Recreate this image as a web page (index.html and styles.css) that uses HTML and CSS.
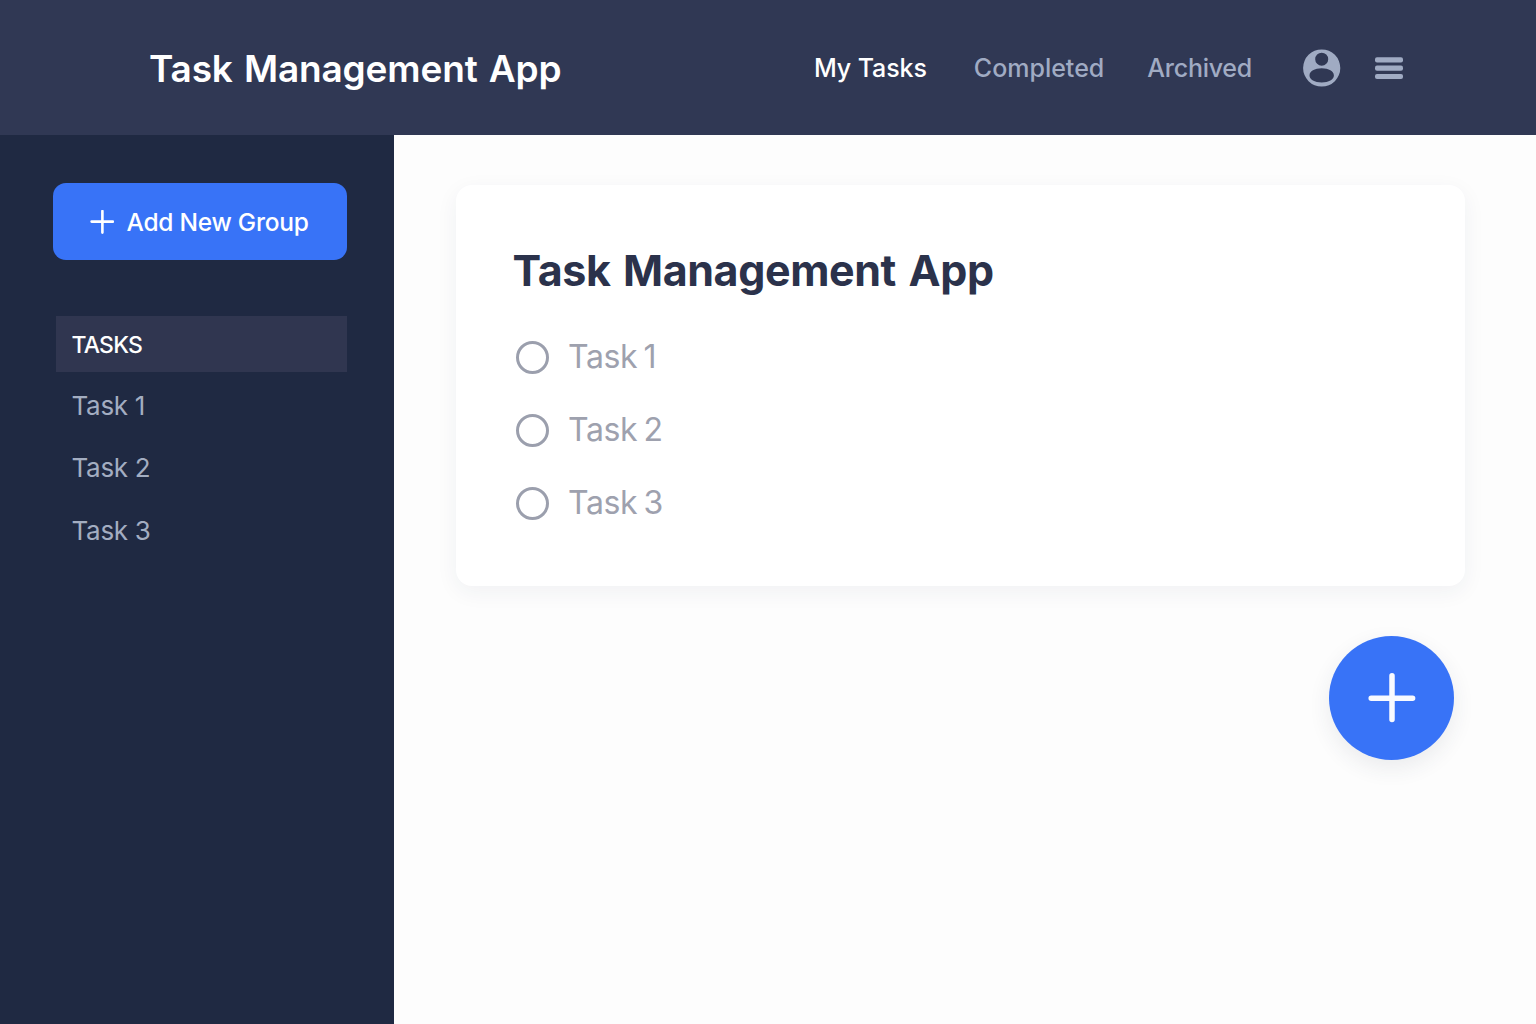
FILE: index.html
```html
<!DOCTYPE html>
<html lang="en">
<head>
<meta charset="utf-8">
<title>Task Management App</title>
<link rel="stylesheet" href="styles.css">
</head>
<body>
<header class="topbar">
  <div class="brand">Task Management App</div>
  <nav class="nav">
    <a class="nav-link active">My Tasks</a>
    <a class="nav-link completed">Completed</a>
    <a class="nav-link archived">Archived</a>
  </nav>
  <svg class="icon-user" viewBox="0 0 38 38"><path fill-rule="evenodd" d="M18.700 .4a18.600 18.600 0 1 1 0 37.200a18.600 18.600 0 1 1 0-37.200ZM18.700 3.700a6.500 6.500 0 1 0 0 13a6.500 6.500 0 1 0 0-13ZM18.700 19.300c-7 0-12.200 3-12.200 7.100s5.200 7 12.200 7s12.200-2.900 12.200-7s-5.200-7.100-12.200-7.100Z"/></svg>
  <svg class="icon-menu" viewBox="0 0 28 24"><rect y="1.200" width="28" height="5.200" rx="2"/><rect y="9.500" width="28" height="5.200" rx="2"/><rect y="17.900" width="28" height="5.200" rx="2"/></svg>
</header>
<div class="layout">
  <aside class="sidebar">
    <button class="add-group">
      <svg class="add-icon" viewBox="0 0 24 24"><path d="M12.400 1v21.600M1.600 11.600h21.400"/></svg>
      <span>Add New Group</span>
    </button>
    <ul class="groups">
      <li class="group current">TASKS</li>
      <li class="group">Task 1</li>
      <li class="group">Task 2</li>
      <li class="group">Task 3</li>
    </ul>
  </aside>
  <main class="content">
    <section class="card">
      <h1 class="card-title">Task Management App</h1>
      <ul class="tasks">
        <li class="task"><i class="check"></i><span class="task-name">Task 1</span></li>
        <li class="task"><i class="check"></i><span class="task-name">Task 2</span></li>
        <li class="task"><i class="check"></i><span class="task-name">Task 3</span></li>
      </ul>
    </section>
    <button class="fab" aria-label="Add task"><svg class="fab-icon" viewBox="0 0 50 50"><path d="M25 2.800v43.600M4.200 25.200h41.400"/></svg></button>
  </main>
</div>
</body>
</html>
```
FILE: styles.css
```css
* { box-sizing: border-box; }
body {
  margin: 0;
  height: 1024px;
  overflow: hidden;
  display: flex;
  flex-direction: column;
  font-family: Inter, "Liberation Sans", sans-serif;
  background: #fdfdfd;
}
ul { list-style: none; margin: 0; padding: 0; }
button { border: 0; font: inherit; padding: 0; }

.topbar {
  flex: none;
  height: 135px;
  padding: 0 133px 0 149px;
  display: flex;
  align-items: center;
  background: #303854;
}
.brand {
  margin-right: auto;
  color: #fff;
  font-size: 37px;
  font-weight: 580;
  line-height: 44px;
  letter-spacing: -.15px;
  word-spacing: 2px;
  margin-top: 2px;
}
.nav { display: flex; margin-right: 51px; }
.nav-link { font-size: 25px; line-height: 30px; color: #a0abc3; font-weight: 450; }
.nav-link.active { color: #fff; font-weight: 500; letter-spacing: -.1px; }
.completed { margin: 0 43px 0 47px; letter-spacing: 0; }
.archived { letter-spacing: -.25px; }
.icon-user { width: 38px; height: 38px; fill: #a0abc3; margin-right: 34px; }
.icon-menu { width: 28px; height: 24px; fill: #a0abc3; }

.layout { flex: 1; display: flex; }
.sidebar { width: 394px; flex: none; background: #1f2942; padding: 48px 47px 0 53px; }
.add-group {
  width: 294px;
  height: 77px;
  border-radius: 13px;
  background: #3873f7;
  color: #fff;
  display: flex;
  align-items: center;
  padding-left: 37px;
  gap: 12.500px;
  font-size: 24.500px;
  font-weight: 500;
  letter-spacing: -.25px;
  word-spacing: 0;
}
.add-icon { width: 24px; height: 24px; fill: none; stroke: #fff; stroke-width: 2.600; stroke-linecap: round; }
.groups { margin: 56px 0 0 3px; }
.group { height: 62.300px; padding: 4px 0 0 15.500px; line-height: 60px; font-size: 26px; letter-spacing: -.3px; color: #a3adc1; }
.group.current { height: 56px; padding-top: 1px; line-height: 56px; background: #303650; color: #fff; font-size: 23px; font-weight: 500; letter-spacing: -.8px; }

.content { flex: 1; padding: 50px 71px 0 62px; display: flex; flex-direction: column; }
.card {
  height: 401px;
  padding: 57px 57px 0;
  border-radius: 16px;
  background: #fff;
  box-shadow: 0 6px 22px rgba(40, 50, 80, .06);
}
.card-title { margin: 0 0 0 -.5px; font-size: 43px; line-height: 57px; font-weight: 700; letter-spacing: -.4px; word-spacing: 2.800px; color: #2b324b; }
.tasks { margin-top: 22px; }
.task { height: 73px; display: flex; align-items: center; gap: 19px; padding-left: 3px; font-size: 32px; color: #9ea1ae; }
.task-name { letter-spacing: -.4px; word-spacing: -2.200px; margin-top: -1.500px; }
.check { width: 33px; height: 33px; border: 3px solid #9b9fad; border-radius: 50%; }
.fab {
  align-self: flex-end;
  width: 125px;
  height: 124px;
  margin: 50px 10.600px 0 0;
  border-radius: 50%;
  background: #3873f7;
  display: grid;
  place-items: center;
  box-shadow: 0 8px 22px rgba(40, 50, 80, .09);
}
.fab-icon { width: 50px; height: 50px; fill: none; stroke: #f8faff; stroke-width: 5.500; stroke-linecap: round; }
```
